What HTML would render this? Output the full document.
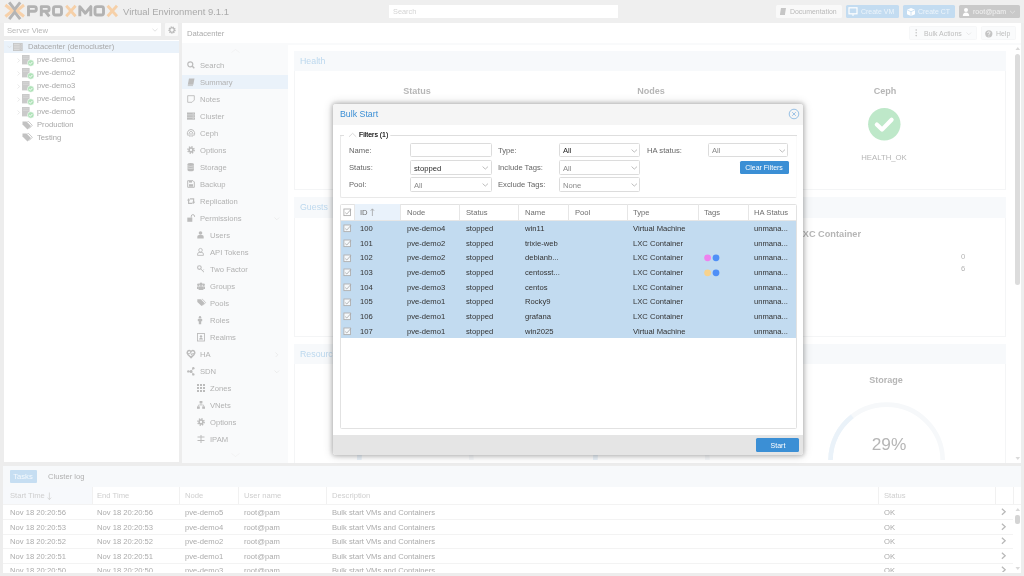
<!DOCTYPE html>
<html><head><meta charset="utf-8">
<style>
*{box-sizing:border-box;margin:0;padding:0}
html,body{width:1024px;height:576px;overflow:hidden}
body{position:relative;background:#ededed;font-family:"Liberation Sans",sans-serif;font-size:7.65px;color:#a8a8a8}
.a{position:absolute}
.t{position:absolute;white-space:nowrap;line-height:12px;will-change:transform}
svg{overflow:visible}
</style></head><body>

<div class="a" style="left:0px;top:0px;width:1024px;height:23px;background:#efefef;"></div>
<svg class="a" style="left:0px;top:0px;" width="30" height="24" viewBox="0 0 30 24"><g fill="none" stroke-width="2.7" stroke-linecap="butt"><polyline points="5.4,5 12.6,10.7 5.4,16.5" stroke="#f7d1aa" stroke-width="3"/><polyline points="24,5 16.8,10.7 24,16.5" stroke="#f7d1aa" stroke-width="3"/><polyline points="9.2,2.3 14.7,9.4 20.2,2.3" stroke="#b4b4b4" stroke-width="2.9"/><polyline points="9.2,19.1 14.7,12 20.2,19.1" stroke="#b4b4b4" stroke-width="2.9"/></g></svg>
<svg class="a" style="left:0px;top:0px;" width="124" height="24" viewBox="0 0 124 24"><g fill="none" stroke-width="2.9" stroke-linejoin="round"><path d="M28.5,16.3 V6.6 H34.3 Q36.3,6.6 36.3,8.6 V9.3 Q36.3,11.3 34.3,11.3 H28.5" stroke="#b2b2b2"/><path d="M41.3,16.3 V6.6 H47.1 Q49.1,6.6 49.1,8.6 V9.3 Q49.1,11.3 47.1,11.3 H41.3 M45.2,11.3 L49.3,16.3" stroke="#b2b2b2"/><rect x="53.5" y="6.6" width="8" height="8.4" rx="2" stroke="#b2b2b2"/><path d="M66.2,5.7 L75.6,16.2 M75.6,5.7 L66.2,16.2" stroke="#f6d0a8" stroke-width="2.8"/><path d="M79.8,16.3 V6.6 L85.3,13.2 L90.8,6.6 V16.3" stroke="#b2b2b2"/><rect x="95" y="6.6" width="8.5" height="8.4" rx="2" stroke="#b2b2b2"/><path d="M107.6,5.7 L117,16.2 M117,5.7 L107.6,16.2" stroke="#f6d0a8" stroke-width="2.8"/></g></svg>
<div class="t" style="top:5.80px;font-size:9.46px;left:123.3px;color:#aaaaaa;">Virtual Environment 9.1.1</div>
<div class="a" style="left:389px;top:5px;width:229px;height:13.4px;background:#ffffff;"></div>
<div class="t" style="top:6.30px;font-size:7.35px;left:392.6px;color:#d4d4d4;">Search</div>
<div class="a" style="left:775.7px;top:5.1px;width:66.4px;height:13.3px;background:#f9f9f9;border-radius:1.5px;"></div>
<svg class="a" style="left:779px;top:7px;" width="8" height="9" viewBox="0 0 8 9"><path d="M2,1 H7 L6,7 H1 Z" fill="#c6c6c6"/><path d="M1,7.5 H6" stroke="#c6c6c6" stroke-width="1"/></svg>
<div class="t" style="top:6.30px;font-size:6.95px;left:790.3px;color:#b9b9b9;">Documentation</div>
<div class="a" style="left:845.9px;top:5.1px;width:53px;height:13.3px;background:#c3dcf1;border-radius:1.5px;"></div>
<svg class="a" style="left:848px;top:7px;" width="10" height="10" viewBox="0 0 10 10"><rect x="1" y="0.8" width="8" height="6" fill="none" stroke="#fff" stroke-width="1.2"/><path d="M3.5,7.5 H6.5 L5,9 Z" fill="#fff"/></svg>
<div class="t" style="top:6.30px;font-size:6.95px;left:860.8px;color:#eef5fb;">Create VM</div>
<div class="a" style="left:903.2px;top:5.1px;width:51.6px;height:13.3px;background:#c3dcf1;border-radius:1.5px;"></div>
<svg class="a" style="left:905.5px;top:6.5px;" width="10" height="10" viewBox="0 0 10 10"><path d="M5,1 L9,2.8 V7.3 L5,9 L1,7.3 V2.8 Z" fill="#fff"/><path d="M1.2,3 L5,4.7 L8.8,3 M5,4.7 V8.8" stroke="#c3dcf1" stroke-width="0.8" fill="none"/></svg>
<div class="t" style="top:6.30px;font-size:6.95px;left:917.7px;color:#eef5fb;">Create CT</div>
<div class="a" style="left:959.2px;top:5.1px;width:60.7px;height:13.3px;background:#c9c9c9;border-radius:1.5px;"></div>
<svg class="a" style="left:962px;top:6.5px;" width="8" height="10" viewBox="0 0 8 10"><circle cx="4" cy="3" r="2" fill="#fff"/><path d="M0.8,9 Q0.8,5.5 4,5.5 Q7.2,5.5 7.2,9 Z" fill="#fff"/></svg>
<div class="t" style="top:6.30px;font-size:7.05px;left:972.8px;color:#f3f3f3;">root@pam</div>
<svg class="a" style="left:1009px;top:10px;" width="8" height="4" viewBox="0 0 8 4"><polyline points="1,0.8 3.5,3.2 6,0.8" fill="none" stroke="#e8e8e8" stroke-width="0.7"/></svg>
<div class="a" style="left:3.5px;top:39.8px;width:175.1px;height:421.9px;background:#ffffff;"></div>
<div class="a" style="left:4px;top:23.1px;width:157.4px;height:12.8px;background:#ffffff;"></div>
<div class="t" style="top:24.70px;font-size:7.65px;left:7.1px;color:#b8b8b8;">Server View</div>
<svg class="a" style="left:152px;top:28px;" width="6" height="4" viewBox="0 0 6 4"><polyline points="0.5,0.8 3,3.2 5.5,0.8" fill="none" stroke="#d0d0d0" stroke-width="0.6"/></svg>
<div class="a" style="left:164.8px;top:23.1px;width:13.3px;height:12.9px;background:#f9f9f9;border-radius:1px;"></div>
<svg class="a" style="left:167.5px;top:25.5px;" width="8" height="8" viewBox="0 0 8 8"><circle cx="4" cy="4" r="2.9" fill="none" stroke="#b8b8b8" stroke-width="1.6" stroke-dasharray="1.1 0.9"/><circle cx="4" cy="4" r="2.2" fill="none" stroke="#b8b8b8" stroke-width="1.1"/></svg>
<div class="a" style="left:3.5px;top:40.7px;width:175.1px;height:12.5px;background:#eaf2fa;"></div>
<svg class="a" style="left:6.5px;top:45px;" width="5" height="4" viewBox="0 0 5 4"><polyline points="0.5,0.8 2.5,2.8 4.5,0.8" fill="none" stroke="#d8d8d8" stroke-width="0.6"/></svg>
<svg class="a" style="left:13px;top:43.2px;" width="10" height="8" viewBox="0 0 10 8"><rect x="0.4" y="0.4" width="8.8" height="7.2" fill="#dadada" stroke="#c4c4c4" stroke-width="0.8"/><path d="M0.4,2.8 H9.2 M0.4,5.2 H9.2" stroke="#c4c4c4" stroke-width="0.7"/><path d="M6.6,1.6 H8.2 M6.6,4 H8.2 M6.6,6.4 H8.2" stroke="#b8b8b8" stroke-width="0.6"/></svg>
<div class="t" style="top:41.30px;font-size:7.65px;left:27.6px;">Datacenter (democluster)</div>
<svg class="a" style="left:17px;top:57.8px;" width="4" height="5" viewBox="0 0 4 5"><polyline points="0.6,0.5 2.6,2.5 0.6,4.5" fill="none" stroke="#dadada" stroke-width="0.6"/></svg>
<svg class="a" style="left:22px;top:54.599999999999994px;" width="13" height="12" viewBox="0 0 13 12"><rect x="0" y="0" width="7.6" height="9.4" fill="#cacaca"/><path d="M1,1.8 H6.6 M1,3.6 H6.6" stroke="#dedede" stroke-width="0.6"/><circle cx="8.8" cy="8" r="3.3" fill="#b0e2b9" stroke="#fff" stroke-width="0.6"/><polyline points="7.2,8 8.4,9.2 10.4,6.9" fill="none" stroke="#fff" stroke-width="0.9"/></svg>
<div class="t" style="top:54.40px;font-size:7.65px;left:37px;">pve-demo1</div>
<svg class="a" style="left:17px;top:70.8px;" width="4" height="5" viewBox="0 0 4 5"><polyline points="0.6,0.5 2.6,2.5 0.6,4.5" fill="none" stroke="#dadada" stroke-width="0.6"/></svg>
<svg class="a" style="left:22px;top:67.6px;" width="13" height="12" viewBox="0 0 13 12"><rect x="0" y="0" width="7.6" height="9.4" fill="#cacaca"/><path d="M1,1.8 H6.6 M1,3.6 H6.6" stroke="#dedede" stroke-width="0.6"/><circle cx="8.8" cy="8" r="3.3" fill="#b0e2b9" stroke="#fff" stroke-width="0.6"/><polyline points="7.2,8 8.4,9.2 10.4,6.9" fill="none" stroke="#fff" stroke-width="0.9"/></svg>
<div class="t" style="top:67.40px;font-size:7.65px;left:37px;">pve-demo2</div>
<svg class="a" style="left:17px;top:83.8px;" width="4" height="5" viewBox="0 0 4 5"><polyline points="0.6,0.5 2.6,2.5 0.6,4.5" fill="none" stroke="#dadada" stroke-width="0.6"/></svg>
<svg class="a" style="left:22px;top:80.6px;" width="13" height="12" viewBox="0 0 13 12"><rect x="0" y="0" width="7.6" height="9.4" fill="#cacaca"/><path d="M1,1.8 H6.6 M1,3.6 H6.6" stroke="#dedede" stroke-width="0.6"/><circle cx="8.8" cy="8" r="3.3" fill="#b0e2b9" stroke="#fff" stroke-width="0.6"/><polyline points="7.2,8 8.4,9.2 10.4,6.9" fill="none" stroke="#fff" stroke-width="0.9"/></svg>
<div class="t" style="top:80.40px;font-size:7.65px;left:37px;">pve-demo3</div>
<svg class="a" style="left:17px;top:96.8px;" width="4" height="5" viewBox="0 0 4 5"><polyline points="0.6,0.5 2.6,2.5 0.6,4.5" fill="none" stroke="#dadada" stroke-width="0.6"/></svg>
<svg class="a" style="left:22px;top:93.6px;" width="13" height="12" viewBox="0 0 13 12"><rect x="0" y="0" width="7.6" height="9.4" fill="#cacaca"/><path d="M1,1.8 H6.6 M1,3.6 H6.6" stroke="#dedede" stroke-width="0.6"/><circle cx="8.8" cy="8" r="3.3" fill="#b0e2b9" stroke="#fff" stroke-width="0.6"/><polyline points="7.2,8 8.4,9.2 10.4,6.9" fill="none" stroke="#fff" stroke-width="0.9"/></svg>
<div class="t" style="top:93.40px;font-size:7.65px;left:37px;">pve-demo4</div>
<svg class="a" style="left:17px;top:109.8px;" width="4" height="5" viewBox="0 0 4 5"><polyline points="0.6,0.5 2.6,2.5 0.6,4.5" fill="none" stroke="#dadada" stroke-width="0.6"/></svg>
<svg class="a" style="left:22px;top:106.6px;" width="13" height="12" viewBox="0 0 13 12"><rect x="0" y="0" width="7.6" height="9.4" fill="#cacaca"/><path d="M1,1.8 H6.6 M1,3.6 H6.6" stroke="#dedede" stroke-width="0.6"/><circle cx="8.8" cy="8" r="3.3" fill="#b0e2b9" stroke="#fff" stroke-width="0.6"/><polyline points="7.2,8 8.4,9.2 10.4,6.9" fill="none" stroke="#fff" stroke-width="0.9"/></svg>
<div class="t" style="top:106.40px;font-size:7.65px;left:37px;">pve-demo5</div>
<svg class="a" style="left:22px;top:120.5px;" width="11" height="9" viewBox="0 0 11 9"><path d="M0.5,0.5 H4.5 L9,5 L5.5,8.5 L0.5,3.5 Z" fill="#c2c2c2"/><path d="M5.5,0.5 H6.6 L10.3,4.3 L7,7.6" fill="none" stroke="#c2c2c2" stroke-width="0.9"/></svg>
<div class="t" style="top:119.10px;font-size:7.65px;left:37px;">Production</div>
<svg class="a" style="left:22px;top:133.4px;" width="11" height="9" viewBox="0 0 11 9"><path d="M0.5,0.5 H4.5 L9,5 L5.5,8.5 L0.5,3.5 Z" fill="#c2c2c2"/><path d="M5.5,0.5 H6.6 L10.3,4.3 L7,7.6" fill="none" stroke="#c2c2c2" stroke-width="0.9"/></svg>
<div class="t" style="top:132.00px;font-size:7.65px;left:37px;">Testing</div>
<div class="a" style="left:181.7px;top:23px;width:839.1px;height:20px;background:#ffffff;"></div>
<div class="t" style="top:27.60px;font-size:7.65px;left:186.7px;color:#acacac;">Datacenter</div>
<div class="a" style="left:909px;top:26.3px;width:67.5px;height:14px;background:#fafbfc;border-radius:1.5px;border:0.5px solid #f6f7f8;"></div>
<svg class="a" style="left:914.5px;top:29px;" width="3" height="8" viewBox="0 0 3 8"><circle cx="1.2" cy="1" r="0.8" fill="#c4c4c4"/><circle cx="1.2" cy="3.8" r="0.8" fill="#c4c4c4"/><circle cx="1.2" cy="6.6" r="0.8" fill="#c4c4c4"/></svg>
<div class="t" style="top:28.00px;font-size:6.95px;left:923.6px;color:#bdbdbd;">Bulk Actions</div>
<svg class="a" style="left:966px;top:32.4px;" width="6" height="4" viewBox="0 0 6 4"><polyline points="0.5,0.5 2.8,2.8 5.1,0.5" fill="none" stroke="#dcdcdc" stroke-width="0.6"/></svg>
<div class="a" style="left:981px;top:26.3px;width:34.6px;height:14px;background:#fafbfc;border-radius:1.5px;border:0.5px solid #f6f7f8;"></div>
<svg class="a" style="left:984.5px;top:29.5px;" width="8" height="8" viewBox="0 0 8 8"><circle cx="3.8" cy="3.8" r="3.6" fill="#c4c4c4"/><path d="M2.6,3 Q2.6,1.8 3.8,1.8 Q5,1.8 5,2.9 Q5,3.6 3.9,4.2 V4.9" fill="none" stroke="#fafbfc" stroke-width="0.9"/><circle cx="3.9" cy="6" r="0.5" fill="#fafbfc"/></svg>
<div class="t" style="top:28.00px;font-size:6.95px;left:996.2px;color:#bdbdbd;">Help</div>
<div class="a" style="left:181.7px;top:43px;width:106px;height:419.8px;background:#f9fafb;"></div>
<svg class="a" style="left:231px;top:49px;" width="9" height="4" viewBox="0 0 9 4"><polyline points="0.5,3.5 4.5,0.5 8.5,3.5" fill="none" stroke="#eeeeee" stroke-width="0.6"/></svg>
<svg class="a" style="left:231px;top:453px;" width="9" height="4" viewBox="0 0 9 4"><polyline points="0.5,0.5 4.5,3.5 8.5,0.5" fill="none" stroke="#eeeeee" stroke-width="0.6"/></svg>
<div class="a" style="left:181.7px;top:75px;width:106px;height:13.8px;background:#eaf2fa;"></div>
<svg class="a" style="left:186.8px;top:61.3px;" width="9" height="9" viewBox="0 0 9 9"><circle cx="3.3" cy="3.3" r="2.5" fill="none" stroke="#bcbcbc" stroke-width="1.2"/><path d="M5.1,5.1 L7.3,7.3" stroke="#bcbcbc" stroke-width="1.4"/></svg>
<div class="t" style="top:59.90px;font-size:7.65px;left:200.2px;color:#b2b2b2;">Search</div>
<svg class="a" style="left:186.8px;top:78.3px;" width="9" height="9" viewBox="0 0 9 9"><path d="M2,0.5 H7.5 L6.3,6.8 H0.8 Z" fill="#bcbcbc"/><path d="M0.8,7.6 H6" stroke="#bcbcbc" stroke-width="0.8"/></svg>
<div class="t" style="top:76.90px;font-size:7.65px;left:200.2px;color:#b2b2b2;">Summary</div>
<svg class="a" style="left:186.8px;top:95.3px;" width="9" height="9" viewBox="0 0 9 9"><path d="M0.7,0.7 H7.3 V5 L5,7.3 H0.7 Z" fill="none" stroke="#bcbcbc" stroke-width="0.9"/></svg>
<div class="t" style="top:93.90px;font-size:7.65px;left:200.2px;color:#b2b2b2;">Notes</div>
<svg class="a" style="left:186.8px;top:112.3px;" width="9" height="9" viewBox="0 0 9 9"><rect x="0" y="0.5" width="8" height="7.2" fill="#bcbcbc"/><path d="M0,2.9 H8 M0,5.3 H8" stroke="#f3f4f5" stroke-width="0.5"/><path d="M5.5,1.7 H7 M5.5,4.1 H7 M5.5,6.5 H7" stroke="#e6e6e6" stroke-width="0.5"/></svg>
<div class="t" style="top:110.90px;font-size:7.65px;left:200.2px;color:#b2b2b2;">Cluster</div>
<svg class="a" style="left:186.8px;top:129.3px;" width="9" height="9" viewBox="0 0 9 9"><path d="M1.2,6.8 Q0,5.6 0.4,3.6 Q1,0.6 4,0.5 Q7,0.6 7.6,3.6 Q8,5.6 6.8,6.8" fill="none" stroke="#bcbcbc" stroke-width="1"/><path d="M2.6,7.6 Q1.6,5.8 2.2,4 Q2.8,2.4 4,2.4 Q5.2,2.4 5.8,4 Q6.4,5.8 5.4,7.6" fill="none" stroke="#bcbcbc" stroke-width="0.9"/><path d="M4,4 V7.8" stroke="#bcbcbc" stroke-width="0.9"/></svg>
<div class="t" style="top:127.90px;font-size:7.65px;left:200.2px;color:#b2b2b2;">Ceph</div>
<svg class="a" style="left:186.8px;top:146.3px;" width="9" height="9" viewBox="0 0 9 9"><circle cx="4" cy="4" r="3.1" fill="none" stroke="#bcbcbc" stroke-width="1.6" stroke-dasharray="1.3 1.13"/><circle cx="4" cy="4" r="1.9" fill="none" stroke="#bcbcbc" stroke-width="1.5"/></svg>
<div class="t" style="top:144.90px;font-size:7.65px;left:200.2px;color:#b2b2b2;">Options</div>
<svg class="a" style="left:186.8px;top:163.3px;" width="9" height="9" viewBox="0 0 9 9"><path d="M0.5,1.3 Q0.5,0 3.7,0 Q6.9,0 6.9,1.3 V7 Q6.9,8.3 3.7,8.3 Q0.5,8.3 0.5,7 Z" fill="#bcbcbc"/><path d="M0.5,2.9 Q3.7,4 6.9,2.9 M0.5,5 Q3.7,6.1 6.9,5" fill="none" stroke="#f3f4f5" stroke-width="0.5"/></svg>
<div class="t" style="top:161.90px;font-size:7.65px;left:200.2px;color:#b2b2b2;">Storage</div>
<svg class="a" style="left:186.8px;top:180.3px;" width="9" height="9" viewBox="0 0 9 9"><path d="M0.7,0.7 H6 L7.3,2 V7.3 H0.7 Z" fill="none" stroke="#bcbcbc" stroke-width="1"/><rect x="2" y="4.2" width="4" height="2.5" fill="#bcbcbc"/><rect x="2" y="1" width="3" height="1.6" fill="#bcbcbc"/></svg>
<div class="t" style="top:178.90px;font-size:7.65px;left:200.2px;color:#b2b2b2;">Backup</div>
<svg class="a" style="left:186.8px;top:197.3px;" width="9" height="9" viewBox="0 0 9 9"><path d="M1.6,3 V6.4 H5.5 M6.6,5.2 V1.8 H2.8" fill="none" stroke="#bcbcbc" stroke-width="1.2"/><path d="M0,3.4 L1.6,1.2 L3.2,3.4 Z M5,4.8 L6.6,7 L8.2,4.8 Z" fill="#bcbcbc"/></svg>
<div class="t" style="top:195.90px;font-size:7.65px;left:200.2px;color:#b2b2b2;">Replication</div>
<svg class="a" style="left:186.8px;top:214.3px;" width="9" height="9" viewBox="0 0 9 9"><rect x="0.3" y="3.6" width="5" height="4.2" fill="#bcbcbc"/><path d="M4.3,3.6 V2.2 Q4.3,0.6 5.9,0.6 Q7.5,0.6 7.5,2.2 V3" fill="none" stroke="#bcbcbc" stroke-width="1"/></svg>
<div class="t" style="top:212.90px;font-size:7.65px;left:200.2px;color:#b2b2b2;">Permissions</div>
<svg class="a" style="left:196.8px;top:231.3px;" width="9" height="9" viewBox="0 0 9 9"><circle cx="3.5" cy="2" r="1.8" fill="#bcbcbc"/><path d="M0.3,7.6 V5.8 Q0.3,4 2,4 H5 Q6.7,4 6.7,5.8 V7.6 Z" fill="#bcbcbc"/></svg>
<div class="t" style="top:229.90px;font-size:7.65px;left:209.89999999999998px;color:#b2b2b2;">Users</div>
<svg class="a" style="left:196.8px;top:248.3px;" width="9" height="9" viewBox="0 0 9 9"><circle cx="3.5" cy="2.2" r="1.8" fill="none" stroke="#bcbcbc" stroke-width="0.9"/><path d="M0.6,7.4 V6 Q0.6,4.5 2.1,4.5 H4.9 Q6.4,4.5 6.4,6 V7.4 Z" fill="none" stroke="#bcbcbc" stroke-width="0.9"/></svg>
<div class="t" style="top:246.90px;font-size:7.65px;left:209.89999999999998px;color:#b2b2b2;">API Tokens</div>
<svg class="a" style="left:196.8px;top:265.3px;" width="9" height="9" viewBox="0 0 9 9"><circle cx="2.4" cy="2.6" r="1.8" fill="none" stroke="#bcbcbc" stroke-width="1.1"/><path d="M3.7,3.9 L7,7.2 M5.5,5.7 L6.6,4.6" stroke="#bcbcbc" stroke-width="1"/></svg>
<div class="t" style="top:263.90px;font-size:7.65px;left:209.89999999999998px;color:#b2b2b2;">Two Factor</div>
<svg class="a" style="left:196.8px;top:282.3px;" width="9" height="9" viewBox="0 0 9 9"><circle cx="4" cy="2.2" r="1.7" fill="#bcbcbc"/><circle cx="1.3" cy="2.8" r="1.2" fill="#bcbcbc"/><circle cx="6.7" cy="2.8" r="1.2" fill="#bcbcbc"/><path d="M1.6,8 V6 Q1.6,4.3 3,4.3 H5 Q6.4,4.3 6.4,6 V8 Z" fill="#bcbcbc"/><path d="M0,7 V5.3 Q0,4.3 1.2,4.3 H1.8 V7 Z M8,7 V5.3 Q8,4.3 6.8,4.3 H6.2 V7 Z" fill="#bcbcbc"/></svg>
<div class="t" style="top:280.90px;font-size:7.65px;left:209.89999999999998px;color:#b2b2b2;">Groups</div>
<svg class="a" style="left:196.8px;top:299.3px;" width="9" height="9" viewBox="0 0 9 9"><path d="M0.3,0.3 H3.8 L7.6,4.1 L4.6,7.1 L0.3,2.9 Z" fill="#bcbcbc"/><path d="M4.8,0.3 H5.6 L8.6,3.6 L5.8,6.4" fill="none" stroke="#bcbcbc" stroke-width="0.8"/></svg>
<div class="t" style="top:297.90px;font-size:7.65px;left:209.89999999999998px;color:#b2b2b2;">Pools</div>
<svg class="a" style="left:196.8px;top:316.3px;" width="9" height="9" viewBox="0 0 9 9"><circle cx="3" cy="1.2" r="1.2" fill="#bcbcbc"/><path d="M1.3,2.7 H4.7 Q5.2,2.7 5.2,3.3 V5.3 H4.2 V8.2 H1.8 V5.3 H0.8 V3.3 Q0.8,2.7 1.3,2.7 Z" fill="#bcbcbc"/></svg>
<div class="t" style="top:314.90px;font-size:7.65px;left:209.89999999999998px;color:#b2b2b2;">Roles</div>
<svg class="a" style="left:196.8px;top:333.3px;" width="9" height="9" viewBox="0 0 9 9"><rect x="0.5" y="0.5" width="7" height="7.5" fill="none" stroke="#bcbcbc" stroke-width="0.9"/><circle cx="4" cy="3.4" r="1.2" fill="#bcbcbc"/><path d="M2,6.4 Q2,4.8 4,4.8 Q6,4.8 6,6.4 Z" fill="#bcbcbc"/></svg>
<div class="t" style="top:331.90px;font-size:7.65px;left:209.89999999999998px;color:#b2b2b2;">Realms</div>
<svg class="a" style="left:186.8px;top:350.3px;" width="9" height="9" viewBox="0 0 9 9"><path d="M4,7.6 L0.9,4.4 Q-0.4,2.8 0.7,1.2 Q2.3,-0.5 4,1.5 Q5.7,-0.5 7.3,1.2 Q8.4,2.8 7.1,4.4 Z" fill="none" stroke="#bcbcbc" stroke-width="1.5"/><polyline points="1,3.6 2.8,3.6 3.6,2.2 4.6,5.2 5.4,3.6 7,3.6" fill="none" stroke="#bcbcbc" stroke-width="0.9"/></svg>
<div class="t" style="top:348.90px;font-size:7.65px;left:200.2px;color:#b2b2b2;">HA</div>
<svg class="a" style="left:186.8px;top:367.3px;" width="9" height="9" viewBox="0 0 9 9"><path d="M1.3,4.4 L4,4.4 M4,4.4 L6.3,1.3 M4,4.4 L6.3,7.4" stroke="#bcbcbc" stroke-width="0.7"/><circle cx="1.3" cy="4.4" r="1.2" fill="#bcbcbc"/><circle cx="6.3" cy="1.3" r="1.2" fill="#bcbcbc"/><circle cx="6.3" cy="7.4" r="1.2" fill="#bcbcbc"/><circle cx="4" cy="4.4" r="1.5" fill="#bcbcbc"/></svg>
<div class="t" style="top:365.90px;font-size:7.65px;left:200.2px;color:#b2b2b2;">SDN</div>
<svg class="a" style="left:196.8px;top:384.3px;" width="9" height="9" viewBox="0 0 9 9"><path d="M0,0 H2 V2 H0 Z M3,0 H5 V2 H3 Z M6,0 H8 V2 H6 Z M0,3 H2 V5 H0 Z M3,3 H5 V5 H3 Z M6,3 H8 V5 H6 Z M0,6 H2 V8 H0 Z M3,6 H5 V8 H3 Z M6,6 H8 V8 H6 Z" fill="#bcbcbc"/></svg>
<div class="t" style="top:382.90px;font-size:7.65px;left:209.89999999999998px;color:#b2b2b2;">Zones</div>
<svg class="a" style="left:196.8px;top:401.3px;" width="9" height="9" viewBox="0 0 9 9"><rect x="2.6" y="0" width="2.8" height="2.4" fill="#bcbcbc"/><rect x="0" y="5.4" width="2.8" height="2.4" fill="#bcbcbc"/><rect x="5.2" y="5.4" width="2.8" height="2.4" fill="#bcbcbc"/><path d="M4,2.4 V4 M1.4,5.4 V4 H6.6 V5.4" fill="none" stroke="#bcbcbc" stroke-width="0.7"/></svg>
<div class="t" style="top:399.90px;font-size:7.65px;left:209.89999999999998px;color:#b2b2b2;">VNets</div>
<svg class="a" style="left:196.8px;top:418.3px;" width="9" height="9" viewBox="0 0 9 9"><circle cx="4" cy="4" r="3.1" fill="none" stroke="#bcbcbc" stroke-width="1.6" stroke-dasharray="1.3 1.13"/><circle cx="4" cy="4" r="1.9" fill="none" stroke="#bcbcbc" stroke-width="1.5"/></svg>
<div class="t" style="top:416.90px;font-size:7.65px;left:209.89999999999998px;color:#b2b2b2;">Options</div>
<svg class="a" style="left:196.8px;top:435.3px;" width="9" height="9" viewBox="0 0 9 9"><path d="M0.5,2 H7.5 M0.5,5.5 H7.5 M4,0 V8" stroke="#bcbcbc" stroke-width="1"/></svg>
<div class="t" style="top:433.90px;font-size:7.65px;left:209.89999999999998px;color:#b2b2b2;">IPAM</div>
<svg class="a" style="left:273.5px;top:216.5px;" width="6" height="4" viewBox="0 0 6 4"><polyline points="0.5,0.5 2.8,2.8 5.1,0.5" fill="none" stroke="#e2e2e2" stroke-width="0.6"/></svg>
<svg class="a" style="left:274.5px;top:352px;" width="4" height="6" viewBox="0 0 4 6"><polyline points="0.5,0.5 2.8,2.8 0.5,5.1" fill="none" stroke="#e2e2e2" stroke-width="0.6"/></svg>
<svg class="a" style="left:273.5px;top:369.5px;" width="6" height="4" viewBox="0 0 6 4"><polyline points="0.5,0.5 2.8,2.8 5.1,0.5" fill="none" stroke="#e2e2e2" stroke-width="0.6"/></svg>
<div class="a" style="left:181.7px;top:43px;width:839.1px;height:1.8px;background:#f9fafb;"></div>
<div class="a" style="left:287.7px;top:44.7px;width:733.1px;height:418px;background:#ffffff;"></div>
<div class="a" style="left:293.8px;top:51px;width:712.7px;height:19.7px;background:#f7f9fb;"></div>
<div class="t" style="top:54.95px;font-size:8.8px;left:299.75px;color:#bcd8ee;">Health</div>
<div class="a" style="left:293.8px;top:70.7px;width:712.7px;height:119.8px;background:#ffffff;border:0.6px solid #f4f5f6;border-top:none;"></div>
<div class="a" style="left:293.8px;top:197px;width:712.7px;height:20.7px;background:#f7f9fb;"></div>
<div class="t" style="top:201.45px;font-size:8.8px;left:299.75px;color:#bcd8ee;">Guests</div>
<div class="a" style="left:293.8px;top:217.7px;width:712.7px;height:119.60000000000001px;background:#ffffff;border:0.6px solid #f4f5f6;border-top:none;"></div>
<div class="a" style="left:293.8px;top:344.2px;width:712.7px;height:19.6px;background:#f7f9fb;"></div>
<div class="t" style="top:348.10px;font-size:8.8px;left:299.75px;color:#bcd8ee;">Resources</div>
<div class="a" style="left:293.8px;top:363.8px;width:712.7px;height:106.20000000000002px;background:#ffffff;border:0.6px solid #f4f5f6;border-top:none;"></div>
<div class="a" style="left:287.7px;top:462.7px;width:733.1px;height:3px;background:#ededed;"></div>
<div class="t" style="top:84.80px;font-size:9.05px;left:217px;width:400px;text-align:center;color:#b6b6b6;font-weight:bold;">Status</div>
<div class="t" style="top:84.80px;font-size:9.05px;left:451px;width:400px;text-align:center;color:#b6b6b6;font-weight:bold;">Nodes</div>
<div class="t" style="top:84.80px;font-size:9.05px;left:684.6px;width:400px;text-align:center;color:#b6b6b6;font-weight:bold;">Ceph</div>
<svg class="a" style="left:868.3px;top:107.6px;" width="33" height="33" viewBox="0 0 33 33"><circle cx="16.3" cy="16.3" r="16.2" fill="#bee8c9"/><polyline points="8.8,16.6 14,21.6 23.6,11.8" fill="none" stroke="#fff" stroke-width="4.2" stroke-linecap="round" stroke-linejoin="round"/></svg>
<div class="t" style="top:151.80px;font-size:7.75px;left:684.3px;width:400px;text-align:center;color:#b6b6b6;">HEALTH_OK</div>
<div class="t" style="top:228.00px;font-size:9.2px;left:461.4px;width:400px;text-align:right;color:#b6b6b6;font-weight:bold;">LXC Container</div>
<div class="t" style="top:250.70px;font-size:7.65px;left:762.6px;width:400px;text-align:center;color:#b4b4b4;">0</div>
<div class="t" style="top:263.00px;font-size:7.65px;left:762.6px;width:400px;text-align:center;color:#b4b4b4;">6</div>
<div class="t" style="top:374.40px;font-size:9.05px;left:686.4px;width:400px;text-align:center;color:#b6b6b6;font-weight:bold;">Storage</div>
<div class="a" style="left:287.7px;top:43px;width:733px;height:416.7px;overflow:hidden">
<svg class="a" style="left:0;top:0" width="733" height="417" viewBox="287.7 43 733 417"><path d="M358.90,460.7 A56.1,56.1 0 0 1 471.10,460.7" fill="none" stroke="#f6f8fa" stroke-width="4.6"/><path d="M358.90,460.7 A56.1,56.1 0 0 1 362.84,440.05" fill="none" stroke="#eaf2f9" stroke-width="4.6"/><path d="M594.90,460.7 A56.1,56.1 0 0 1 707.10,460.7" fill="none" stroke="#f6f8fa" stroke-width="4.6"/><path d="M594.90,460.7 A56.1,56.1 0 0 1 625.53,410.71" fill="none" stroke="#eaf2f9" stroke-width="4.6"/><path d="M830.20,460.7 A56.1,56.1 0 0 1 942.40,460.7" fill="none" stroke="#f6f8fa" stroke-width="4.6"/><path d="M830.20,460.7 A56.1,56.1 0 0 1 851.92,416.37" fill="none" stroke="#eaf2f9" stroke-width="4.6"/></svg>
</div>
<div class="t" style="top:437.60px;font-size:17.3px;left:688.6px;width:400px;text-align:center;color:#b6b6b6;">29%</div>
<svg class="a" style="left:1014.5px;top:46px;" width="6" height="5" viewBox="0 0 6 5"><path d="M0.5,4 L2.8,1 L5.1,4 Z" fill="#dadada"/></svg>
<div class="a" style="left:1014.8px;top:53.9px;width:5px;height:231.4px;background:#dcdcdc;border-radius:2.5px;"></div>
<svg class="a" style="left:1014.5px;top:456px;" width="6" height="5" viewBox="0 0 6 5"><path d="M0.5,1 L2.8,4 L5.1,1 Z" fill="#dadada"/></svg>
<div class="a" style="left:3px;top:465.6px;width:1017.5px;height:107px;background:#ffffff;"></div>
<div class="a" style="left:3px;top:465.6px;width:1017.5px;height:21.6px;background:#f7f9fb;"></div>
<div class="a" style="left:9.7px;top:470px;width:27px;height:12.8px;background:#c6def2;border-radius:1px;"></div>
<div class="t" style="top:471.00px;font-size:7.65px;left:-176.8px;width:400px;text-align:center;color:#f4f9fd;">Tasks</div>
<div class="t" style="top:471.00px;font-size:7.65px;left:47.7px;color:#b1b1b1;">Cluster log</div>
<div class="a" style="left:3px;top:487.2px;width:88.5px;height:17.2px;background:#f7f9fc;"></div>
<div class="a" style="left:91.5px;top:487.2px;width:0.8px;height:17.2px;background:#f1f1f1;"></div>
<div class="a" style="left:179.3px;top:487.2px;width:0.8px;height:17.2px;background:#f1f1f1;"></div>
<div class="a" style="left:238px;top:487.2px;width:0.8px;height:17.2px;background:#f1f1f1;"></div>
<div class="a" style="left:326.1px;top:487.2px;width:0.8px;height:17.2px;background:#f1f1f1;"></div>
<div class="a" style="left:877.6px;top:487.2px;width:0.8px;height:17.2px;background:#f1f1f1;"></div>
<div class="a" style="left:994.9px;top:487.2px;width:0.8px;height:17.2px;background:#f1f1f1;"></div>
<div class="a" style="left:1012.8px;top:487.2px;width:0.8px;height:17.2px;background:#f1f1f1;"></div>
<div class="a" style="left:3px;top:504.2px;width:1017.5px;height:0.7px;background:#f3f3f3;"></div>
<div class="t" style="top:490.40px;font-size:7.65px;left:9.7px;color:#cfcfcf;">Start Time</div>
<svg class="a" style="left:46.5px;top:491.5px;" width="5" height="9" viewBox="0 0 5 9"><path d="M2.4,0.5 V7.5 M0.6,5.6 L2.4,7.7 L4.2,5.6" fill="none" stroke="#cfcfcf" stroke-width="0.7"/></svg>
<div class="t" style="top:490.40px;font-size:7.65px;left:97.4px;color:#cfcfcf;">End Time</div>
<div class="t" style="top:490.40px;font-size:7.65px;left:185.3px;color:#cfcfcf;">Node</div>
<div class="t" style="top:490.40px;font-size:7.65px;left:244px;color:#cfcfcf;">User name</div>
<div class="t" style="top:490.40px;font-size:7.65px;left:331.7px;color:#cfcfcf;">Description</div>
<div class="t" style="top:490.40px;font-size:7.65px;left:883.7px;color:#cfcfcf;">Status</div>
<div class="a" style="left:3px;top:505px;width:1010px;height:67px;overflow:hidden">
<div class="t" style="top:1.90px;font-size:7.65px;left:6.7px;color:#acacac;">Nov 18 20:20:56</div>
<div class="t" style="top:1.90px;font-size:7.65px;left:94.4px;color:#acacac;">Nov 18 20:20:56</div>
<div class="t" style="top:1.90px;font-size:7.65px;left:182.3px;color:#acacac;">pve-demo5</div>
<div class="t" style="top:1.90px;font-size:7.65px;left:241px;color:#acacac;">root@pam</div>
<div class="t" style="top:1.90px;font-size:7.65px;left:328.7px;color:#acacac;">Bulk start VMs and Containers</div>
<div class="t" style="top:1.90px;font-size:7.65px;left:880.7px;color:#acacac;">OK</div>
<svg class="a" style="left:997.8px;top:2.899999999999954px;" width="6" height="8" viewBox="0 0 6 8"><polyline points="0.9,0.8 4.2,3.8 0.9,6.8" fill="none" stroke="#b8b8b8" stroke-width="1.25"/></svg>
<div class="a" style="left:0px;top:14.0px;width:1010px;height:0.8px;background:#f3f3f3;"></div>
<div class="t" style="top:16.52px;font-size:7.65px;left:6.7px;color:#acacac;">Nov 18 20:20:53</div>
<div class="t" style="top:16.52px;font-size:7.65px;left:94.4px;color:#acacac;">Nov 18 20:20:53</div>
<div class="t" style="top:16.52px;font-size:7.65px;left:182.3px;color:#acacac;">pve-demo4</div>
<div class="t" style="top:16.52px;font-size:7.65px;left:241px;color:#acacac;">root@pam</div>
<div class="t" style="top:16.52px;font-size:7.65px;left:328.7px;color:#acacac;">Bulk start VMs and Containers</div>
<div class="t" style="top:16.52px;font-size:7.65px;left:880.7px;color:#acacac;">OK</div>
<svg class="a" style="left:997.8px;top:17.51999999999996px;" width="6" height="8" viewBox="0 0 6 8"><polyline points="0.9,0.8 4.2,3.8 0.9,6.8" fill="none" stroke="#b8b8b8" stroke-width="1.25"/></svg>
<div class="a" style="left:0px;top:28.620000000000005px;width:1010px;height:0.8px;background:#f3f3f3;"></div>
<div class="t" style="top:31.14px;font-size:7.65px;left:6.7px;color:#acacac;">Nov 18 20:20:52</div>
<div class="t" style="top:31.14px;font-size:7.65px;left:94.4px;color:#acacac;">Nov 18 20:20:52</div>
<div class="t" style="top:31.14px;font-size:7.65px;left:182.3px;color:#acacac;">pve-demo2</div>
<div class="t" style="top:31.14px;font-size:7.65px;left:241px;color:#acacac;">root@pam</div>
<div class="t" style="top:31.14px;font-size:7.65px;left:328.7px;color:#acacac;">Bulk start VMs and Containers</div>
<div class="t" style="top:31.14px;font-size:7.65px;left:880.7px;color:#acacac;">OK</div>
<svg class="a" style="left:997.8px;top:32.139999999999965px;" width="6" height="8" viewBox="0 0 6 8"><polyline points="0.9,0.8 4.2,3.8 0.9,6.8" fill="none" stroke="#b8b8b8" stroke-width="1.25"/></svg>
<div class="a" style="left:0px;top:43.24000000000001px;width:1010px;height:0.8px;background:#f3f3f3;"></div>
<div class="t" style="top:45.76px;font-size:7.65px;left:6.7px;color:#acacac;">Nov 18 20:20:51</div>
<div class="t" style="top:45.76px;font-size:7.65px;left:94.4px;color:#acacac;">Nov 18 20:20:51</div>
<div class="t" style="top:45.76px;font-size:7.65px;left:182.3px;color:#acacac;">pve-demo1</div>
<div class="t" style="top:45.76px;font-size:7.65px;left:241px;color:#acacac;">root@pam</div>
<div class="t" style="top:45.76px;font-size:7.65px;left:328.7px;color:#acacac;">Bulk start VMs and Containers</div>
<div class="t" style="top:45.76px;font-size:7.65px;left:880.7px;color:#acacac;">OK</div>
<svg class="a" style="left:997.8px;top:46.75999999999997px;" width="6" height="8" viewBox="0 0 6 8"><polyline points="0.9,0.8 4.2,3.8 0.9,6.8" fill="none" stroke="#b8b8b8" stroke-width="1.25"/></svg>
<div class="a" style="left:0px;top:57.860000000000014px;width:1010px;height:0.8px;background:#f3f3f3;"></div>
<div class="t" style="top:60.38px;font-size:7.65px;left:6.7px;color:#acacac;">Nov 18 20:20:50</div>
<div class="t" style="top:60.38px;font-size:7.65px;left:94.4px;color:#acacac;">Nov 18 20:20:50</div>
<div class="t" style="top:60.38px;font-size:7.65px;left:182.3px;color:#acacac;">pve-demo3</div>
<div class="t" style="top:60.38px;font-size:7.65px;left:241px;color:#acacac;">root@pam</div>
<div class="t" style="top:60.38px;font-size:7.65px;left:328.7px;color:#acacac;">Bulk start VMs and Containers</div>
<div class="t" style="top:60.38px;font-size:7.65px;left:880.7px;color:#acacac;">OK</div>
<svg class="a" style="left:997.8px;top:61.379999999999974px;" width="6" height="8" viewBox="0 0 6 8"><polyline points="0.9,0.8 4.2,3.8 0.9,6.8" fill="none" stroke="#b8b8b8" stroke-width="1.25"/></svg>
<div class="a" style="left:0px;top:72.48000000000002px;width:1010px;height:0.8px;background:#f3f3f3;"></div>
</div>
<svg class="a" style="left:1014.5px;top:507px;" width="6" height="5" viewBox="0 0 6 5"><path d="M0.5,4 L2.8,1 L5.1,4 Z" fill="#dadada"/></svg>
<div class="a" style="left:1015.4px;top:514.5px;width:4.2px;height:9.5px;background:#d4d4d4;border-radius:2px;"></div>
<svg class="a" style="left:1014.5px;top:566px;" width="6" height="5" viewBox="0 0 6 5"><path d="M0.5,1 L2.8,4 L5.1,1 Z" fill="#dadada"/></svg>
<div class="a" style="left:333px;top:103.6px;width:469.5px;height:351.6px;background:#ffffff;box-shadow:0 0 4px 0.5px rgba(0,0,0,0.22), 0 0 10px 1px rgba(0,0,0,0.16);border-radius:3px;"></div>
<div class="a" style="left:333px;top:103.6px;width:469.5px;height:21.2px;background:#f5f5f5;border-radius:3px 3px 0 0;"></div>
<div class="t" style="top:108.20px;font-size:8.8px;left:339.75px;color:#3b8fd5;">Bulk Start</div>
<svg class="a" style="left:787.5px;top:108px;" width="13" height="13" viewBox="0 0 13 13"><circle cx="6" cy="6" r="4.8" fill="none" stroke="#7fb2e0" stroke-width="0.8"/><path d="M4.2,4.2 L7.8,7.8 M7.8,4.2 L4.2,7.8" stroke="#7fb2e0" stroke-width="0.75"/></svg>
<div class="a" style="left:339.7px;top:135.1px;width:457.3px;height:63.3px;background:transparent;border:0.8px solid #e9e9e9;border-right-color:#fafafa;border-radius:2px;"></div>
<div class="a" style="left:339.9px;top:135.1px;width:5.5px;height:0.8px;background:#dedede;"></div>
<div class="a" style="left:390.5px;top:135.1px;width:406.6px;height:0.8px;background:#dedede;"></div>
<div class="a" style="left:344px;top:134px;width:46px;height:3px;background:#ffffff;"></div>
<svg class="a" style="left:347.5px;top:132px;" width="10" height="6" viewBox="0 0 10 6"><polyline points="1,4.8 4.6,1.3 8.2,4.8" fill="none" stroke="#cfcfcf" stroke-width="0.8"/></svg>
<div class="t" style="top:129.20px;font-size:6.95px;left:359px;color:#262626;text-shadow:0 0 0.3px #555;">Filters (1)</div>
<div class="t" style="top:145.00px;font-size:7.65px;left:348.8px;color:#666666;">Name:</div>
<div class="t" style="top:162.10px;font-size:7.65px;left:348.8px;color:#666666;">Status:</div>
<div class="t" style="top:179.20px;font-size:7.65px;left:348.8px;color:#666666;">Pool:</div>
<div class="a" style="left:410.4px;top:142.8px;width:81.90000000000003px;height:14.6px;background:#ffffff;border:0.7px solid #dcdcdc;border-radius:1.5px;"></div>
<div class="a" style="left:410.4px;top:160.1px;width:81.90000000000003px;height:14.6px;background:#ffffff;border:0.7px solid #dcdcdc;border-radius:1.5px;"></div>
<div class="t" style="top:162.70px;font-size:7.65px;left:414.4px;color:#2a2a2a;">stopped</div>
<svg class="a" style="left:482.3px;top:166.1px;" width="7" height="4" viewBox="0 0 7 4"><polyline points="0.6,0.6 3.3,3.1 6,0.6" fill="none" stroke="#9a9a9a" stroke-width="0.65"/></svg>
<div class="a" style="left:410.4px;top:177.1px;width:81.90000000000003px;height:14.6px;background:#ffffff;border:0.7px solid #dcdcdc;border-radius:1.5px;"></div>
<div class="t" style="top:179.70px;font-size:7.65px;left:414.4px;color:#8a8a8a;">All</div>
<svg class="a" style="left:482.3px;top:183.1px;" width="7" height="4" viewBox="0 0 7 4"><polyline points="0.6,0.6 3.3,3.1 6,0.6" fill="none" stroke="#9a9a9a" stroke-width="0.65"/></svg>
<div class="t" style="top:145.00px;font-size:7.65px;left:498.1px;color:#666666;">Type:</div>
<div class="t" style="top:162.10px;font-size:7.65px;left:498.1px;color:#666666;">Include Tags:</div>
<div class="t" style="top:179.20px;font-size:7.65px;left:498.1px;color:#666666;">Exclude Tags:</div>
<div class="a" style="left:559.2px;top:142.8px;width:81.29999999999995px;height:14.6px;background:#ffffff;border:0.7px solid #dcdcdc;border-radius:1.5px;"></div>
<div class="t" style="top:145.40px;font-size:7.65px;left:563.2px;color:#262626;">All</div>
<svg class="a" style="left:630.5px;top:148.8px;" width="7" height="4" viewBox="0 0 7 4"><polyline points="0.6,0.6 3.3,3.1 6,0.6" fill="none" stroke="#9a9a9a" stroke-width="0.65"/></svg>
<div class="a" style="left:559.2px;top:160.1px;width:81.29999999999995px;height:14.6px;background:#ffffff;border:0.7px solid #dcdcdc;border-radius:1.5px;"></div>
<div class="t" style="top:162.70px;font-size:7.65px;left:563.2px;color:#8a8a8a;">All</div>
<svg class="a" style="left:630.5px;top:166.1px;" width="7" height="4" viewBox="0 0 7 4"><polyline points="0.6,0.6 3.3,3.1 6,0.6" fill="none" stroke="#9a9a9a" stroke-width="0.65"/></svg>
<div class="a" style="left:559.2px;top:177.1px;width:81.29999999999995px;height:14.6px;background:#ffffff;border:0.7px solid #dcdcdc;border-radius:1.5px;"></div>
<div class="t" style="top:179.70px;font-size:7.65px;left:563.2px;color:#8a8a8a;">None</div>
<svg class="a" style="left:630.5px;top:183.1px;" width="7" height="4" viewBox="0 0 7 4"><polyline points="0.6,0.6 3.3,3.1 6,0.6" fill="none" stroke="#9a9a9a" stroke-width="0.65"/></svg>
<div class="t" style="top:145.00px;font-size:7.65px;left:646.8px;color:#666666;">HA status:</div>
<div class="a" style="left:707.8px;top:142.8px;width:80.70000000000005px;height:14.6px;background:#ffffff;border:0.7px solid #dcdcdc;border-radius:1.5px;"></div>
<div class="t" style="top:145.40px;font-size:7.65px;left:711.8px;color:#8a8a8a;">All</div>
<svg class="a" style="left:778.5px;top:148.8px;" width="7" height="4" viewBox="0 0 7 4"><polyline points="0.6,0.6 3.3,3.1 6,0.6" fill="none" stroke="#9a9a9a" stroke-width="0.65"/></svg>
<div class="a" style="left:740px;top:160.5px;width:48.5px;height:13.9px;background:#3b8fd5;border-radius:1.5px;"></div>
<div class="t" style="top:162.20px;font-size:7.0px;left:564.3px;width:400px;text-align:center;color:#ffffff;">Clear Filters</div>
<div class="a" style="left:340px;top:203.6px;width:457px;height:225.4px;background:#ffffff;border:0.8px solid #e2e2e2;border-radius:1.5px;"></div>
<div class="a" style="left:353.5px;top:204.29999999999998px;width:46.9px;height:16.600000000000023px;background:#e9f2fb;"></div>
<div class="a" style="left:353.5px;top:204.29999999999998px;width:0.7px;height:16.600000000000023px;background:#e6e6e6;"></div>
<div class="a" style="left:400.4px;top:204.29999999999998px;width:0.7px;height:16.600000000000023px;background:#e6e6e6;"></div>
<div class="a" style="left:459.4px;top:204.29999999999998px;width:0.7px;height:16.600000000000023px;background:#e6e6e6;"></div>
<div class="a" style="left:518.3px;top:204.29999999999998px;width:0.7px;height:16.600000000000023px;background:#e6e6e6;"></div>
<div class="a" style="left:568.3px;top:204.29999999999998px;width:0.7px;height:16.600000000000023px;background:#e6e6e6;"></div>
<div class="a" style="left:626.5px;top:204.29999999999998px;width:0.7px;height:16.600000000000023px;background:#e6e6e6;"></div>
<div class="a" style="left:697.7px;top:204.29999999999998px;width:0.7px;height:16.600000000000023px;background:#e6e6e6;"></div>
<div class="a" style="left:747.7px;top:204.29999999999998px;width:0.7px;height:16.600000000000023px;background:#e6e6e6;"></div>
<div class="a" style="left:340.7px;top:220.20000000000002px;width:455.6px;height:0.7px;background:#e6e6e6;"></div>
<svg class="a" style="left:343px;top:208.4px;" width="9" height="9" viewBox="0 0 9 9"><rect x="0.9" y="1" width="6.6" height="6.6" fill="#ffffff" stroke="#b0b0b0" stroke-width="0.9"/><polyline points="2.2,4.6 3.8,6 7.8,1.6" fill="none" stroke="#a0a0a0" stroke-width="0.75"/></svg>
<div class="t" style="top:207.00px;font-size:7.65px;left:360.2px;color:#6f6f6f;">ID</div>
<svg class="a" style="left:369.5px;top:207.9px;" width="5" height="9" viewBox="0 0 5 9"><path d="M2.4,8 V1 M0.7,2.8 L2.4,0.8 L4.1,2.8" fill="none" stroke="#999" stroke-width="0.7"/></svg>
<div class="t" style="top:207.00px;font-size:7.65px;left:407px;color:#6f6f6f;">Node</div>
<div class="t" style="top:207.00px;font-size:7.65px;left:465.7px;color:#6f6f6f;">Status</div>
<div class="t" style="top:207.00px;font-size:7.65px;left:524.6px;color:#6f6f6f;">Name</div>
<div class="t" style="top:207.00px;font-size:7.65px;left:574.6px;color:#6f6f6f;">Pool</div>
<div class="t" style="top:207.00px;font-size:7.65px;left:633.2px;color:#6f6f6f;">Type</div>
<div class="t" style="top:207.00px;font-size:7.65px;left:704px;color:#6f6f6f;">Tags</div>
<div class="t" style="top:207.00px;font-size:7.65px;left:754px;color:#6f6f6f;">HA Status</div>
<div class="a" style="left:340.7px;top:220.9px;width:455.6px;height:117.44px;background:#c2dbf0;"></div>
<svg class="a" style="left:343px;top:224.24px;" width="9" height="9" viewBox="0 0 9 9"><rect x="0.9" y="1" width="6.6" height="6.6" fill="#f4f8fb" stroke="#b0b0b0" stroke-width="0.9"/><polyline points="2.2,4.6 3.8,6 7.8,1.6" fill="none" stroke="#a0a0a0" stroke-width="0.75"/></svg>
<div class="t" style="top:222.84px;font-size:7.65px;left:360.2px;color:#333333;">100</div>
<div class="t" style="top:222.84px;font-size:7.65px;left:407px;color:#333333;">pve-demo4</div>
<div class="t" style="top:222.84px;font-size:7.65px;left:465.7px;color:#333333;">stopped</div>
<div class="t" style="top:222.84px;font-size:7.65px;left:524.6px;color:#333333;">win11</div>
<div class="t" style="top:222.84px;font-size:7.65px;left:633.2px;color:#333333;">Virtual Machine</div>
<div class="t" style="top:222.84px;font-size:7.65px;left:754px;color:#333333;">unmana...</div>
<svg class="a" style="left:343px;top:238.92000000000002px;" width="9" height="9" viewBox="0 0 9 9"><rect x="0.9" y="1" width="6.6" height="6.6" fill="#f4f8fb" stroke="#b0b0b0" stroke-width="0.9"/><polyline points="2.2,4.6 3.8,6 7.8,1.6" fill="none" stroke="#a0a0a0" stroke-width="0.75"/></svg>
<div class="t" style="top:237.52px;font-size:7.65px;left:360.2px;color:#333333;">101</div>
<div class="t" style="top:237.52px;font-size:7.65px;left:407px;color:#333333;">pve-demo2</div>
<div class="t" style="top:237.52px;font-size:7.65px;left:465.7px;color:#333333;">stopped</div>
<div class="t" style="top:237.52px;font-size:7.65px;left:524.6px;color:#333333;">trixie-web</div>
<div class="t" style="top:237.52px;font-size:7.65px;left:633.2px;color:#333333;">LXC Container</div>
<div class="t" style="top:237.52px;font-size:7.65px;left:754px;color:#333333;">unmana...</div>
<svg class="a" style="left:343px;top:253.59999999999997px;" width="9" height="9" viewBox="0 0 9 9"><rect x="0.9" y="1" width="6.6" height="6.6" fill="#f4f8fb" stroke="#b0b0b0" stroke-width="0.9"/><polyline points="2.2,4.6 3.8,6 7.8,1.6" fill="none" stroke="#a0a0a0" stroke-width="0.75"/></svg>
<div class="t" style="top:252.20px;font-size:7.65px;left:360.2px;color:#333333;">102</div>
<div class="t" style="top:252.20px;font-size:7.65px;left:407px;color:#333333;">pve-demo2</div>
<div class="t" style="top:252.20px;font-size:7.65px;left:465.7px;color:#333333;">stopped</div>
<div class="t" style="top:252.20px;font-size:7.65px;left:524.6px;color:#333333;">debianb...</div>
<div class="t" style="top:252.20px;font-size:7.65px;left:633.2px;color:#333333;">LXC Container</div>
<div class="t" style="top:252.20px;font-size:7.65px;left:754px;color:#333333;">unmana...</div>
<svg class="a" style="left:703.5px;top:254.39999999999998px;" width="16" height="8" viewBox="0 0 16 8"><circle cx="3.6" cy="3.8" r="3.4" fill="#ee82ee"/><circle cx="12" cy="3.8" r="3.4" fill="#4f8ff7"/></svg>
<svg class="a" style="left:343px;top:268.28px;" width="9" height="9" viewBox="0 0 9 9"><rect x="0.9" y="1" width="6.6" height="6.6" fill="#f4f8fb" stroke="#b0b0b0" stroke-width="0.9"/><polyline points="2.2,4.6 3.8,6 7.8,1.6" fill="none" stroke="#a0a0a0" stroke-width="0.75"/></svg>
<div class="t" style="top:266.88px;font-size:7.65px;left:360.2px;color:#333333;">103</div>
<div class="t" style="top:266.88px;font-size:7.65px;left:407px;color:#333333;">pve-demo5</div>
<div class="t" style="top:266.88px;font-size:7.65px;left:465.7px;color:#333333;">stopped</div>
<div class="t" style="top:266.88px;font-size:7.65px;left:524.6px;color:#333333;">centosst...</div>
<div class="t" style="top:266.88px;font-size:7.65px;left:633.2px;color:#333333;">LXC Container</div>
<div class="t" style="top:266.88px;font-size:7.65px;left:754px;color:#333333;">unmana...</div>
<svg class="a" style="left:703.5px;top:269.08px;" width="16" height="8" viewBox="0 0 16 8"><circle cx="3.6" cy="3.8" r="3.4" fill="#f7d28d"/><circle cx="12" cy="3.8" r="3.4" fill="#4f8ff7"/></svg>
<svg class="a" style="left:343px;top:282.96px;" width="9" height="9" viewBox="0 0 9 9"><rect x="0.9" y="1" width="6.6" height="6.6" fill="#f4f8fb" stroke="#b0b0b0" stroke-width="0.9"/><polyline points="2.2,4.6 3.8,6 7.8,1.6" fill="none" stroke="#a0a0a0" stroke-width="0.75"/></svg>
<div class="t" style="top:281.56px;font-size:7.65px;left:360.2px;color:#333333;">104</div>
<div class="t" style="top:281.56px;font-size:7.65px;left:407px;color:#333333;">pve-demo3</div>
<div class="t" style="top:281.56px;font-size:7.65px;left:465.7px;color:#333333;">stopped</div>
<div class="t" style="top:281.56px;font-size:7.65px;left:524.6px;color:#333333;">centos</div>
<div class="t" style="top:281.56px;font-size:7.65px;left:633.2px;color:#333333;">LXC Container</div>
<div class="t" style="top:281.56px;font-size:7.65px;left:754px;color:#333333;">unmana...</div>
<svg class="a" style="left:343px;top:297.64px;" width="9" height="9" viewBox="0 0 9 9"><rect x="0.9" y="1" width="6.6" height="6.6" fill="#f4f8fb" stroke="#b0b0b0" stroke-width="0.9"/><polyline points="2.2,4.6 3.8,6 7.8,1.6" fill="none" stroke="#a0a0a0" stroke-width="0.75"/></svg>
<div class="t" style="top:296.24px;font-size:7.65px;left:360.2px;color:#333333;">105</div>
<div class="t" style="top:296.24px;font-size:7.65px;left:407px;color:#333333;">pve-demo1</div>
<div class="t" style="top:296.24px;font-size:7.65px;left:465.7px;color:#333333;">stopped</div>
<div class="t" style="top:296.24px;font-size:7.65px;left:524.6px;color:#333333;">Rocky9</div>
<div class="t" style="top:296.24px;font-size:7.65px;left:633.2px;color:#333333;">LXC Container</div>
<div class="t" style="top:296.24px;font-size:7.65px;left:754px;color:#333333;">unmana...</div>
<svg class="a" style="left:343px;top:312.32px;" width="9" height="9" viewBox="0 0 9 9"><rect x="0.9" y="1" width="6.6" height="6.6" fill="#f4f8fb" stroke="#b0b0b0" stroke-width="0.9"/><polyline points="2.2,4.6 3.8,6 7.8,1.6" fill="none" stroke="#a0a0a0" stroke-width="0.75"/></svg>
<div class="t" style="top:310.92px;font-size:7.65px;left:360.2px;color:#333333;">106</div>
<div class="t" style="top:310.92px;font-size:7.65px;left:407px;color:#333333;">pve-demo1</div>
<div class="t" style="top:310.92px;font-size:7.65px;left:465.7px;color:#333333;">stopped</div>
<div class="t" style="top:310.92px;font-size:7.65px;left:524.6px;color:#333333;">grafana</div>
<div class="t" style="top:310.92px;font-size:7.65px;left:633.2px;color:#333333;">LXC Container</div>
<div class="t" style="top:310.92px;font-size:7.65px;left:754px;color:#333333;">unmana...</div>
<svg class="a" style="left:343px;top:326.99999999999994px;" width="9" height="9" viewBox="0 0 9 9"><rect x="0.9" y="1" width="6.6" height="6.6" fill="#f4f8fb" stroke="#b0b0b0" stroke-width="0.9"/><polyline points="2.2,4.6 3.8,6 7.8,1.6" fill="none" stroke="#a0a0a0" stroke-width="0.75"/></svg>
<div class="t" style="top:325.60px;font-size:7.65px;left:360.2px;color:#333333;">107</div>
<div class="t" style="top:325.60px;font-size:7.65px;left:407px;color:#333333;">pve-demo1</div>
<div class="t" style="top:325.60px;font-size:7.65px;left:465.7px;color:#333333;">stopped</div>
<div class="t" style="top:325.60px;font-size:7.65px;left:524.6px;color:#333333;">win2025</div>
<div class="t" style="top:325.60px;font-size:7.65px;left:633.2px;color:#333333;">Virtual Machine</div>
<div class="t" style="top:325.60px;font-size:7.65px;left:754px;color:#333333;">unmana...</div>
<div class="a" style="left:333px;top:434.8px;width:469.5px;height:20.400000000000034px;background:#e5e5e5;border-radius:0 0 3px 3px;"></div>
<div class="a" style="left:755.9px;top:438.1px;width:43.3px;height:13.9px;background:#3b8fd5;border-radius:1.5px;"></div>
<div class="t" style="top:439.80px;font-size:7.0px;left:577.6px;width:400px;text-align:center;color:#ffffff;">Start</div>
</body></html>
